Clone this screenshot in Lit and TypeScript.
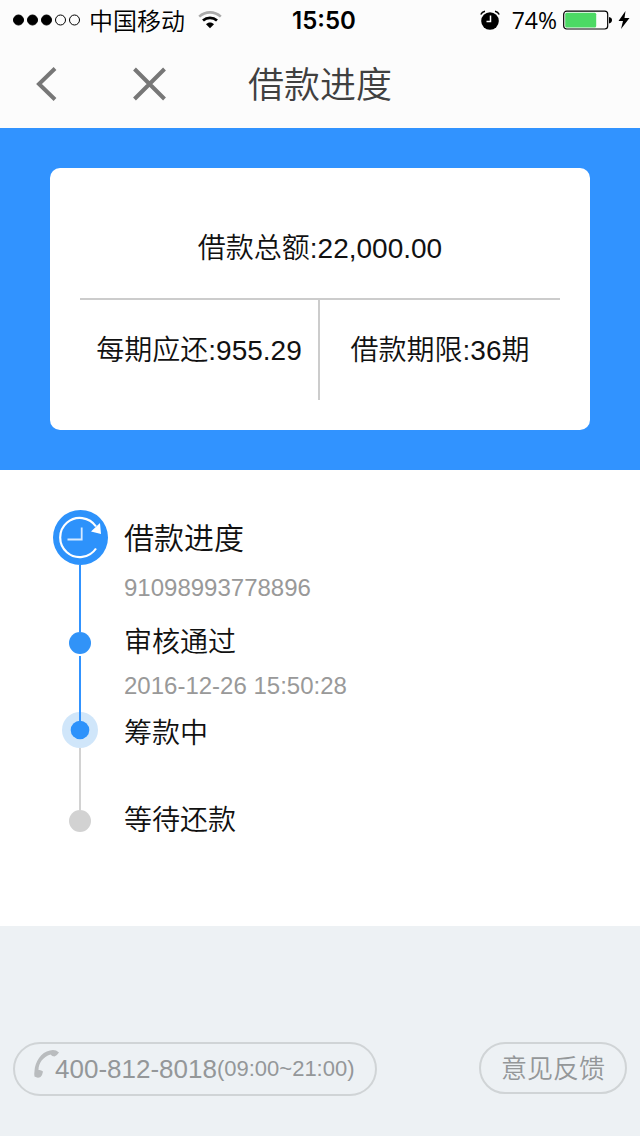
import { LitElement, html, css, svg, nothing } from "lit";
import { customElement, property } from "lit/decorators.js";

type StepState = "start" | "done" | "current" | "waiting";

interface Step {
  title: string;
  detail?: string;
  state: StepState;
}

@customElement("status-bar")
class StatusBar extends LitElement {
  static styles = css`
    :host {
      display: grid;
      grid-template-columns: 1fr auto 1fr;
      align-items: center;
      height: 40px;
      padding: 0 10px 0 13px;
      font: 24px/40px "Open Sans", "Noto Sans CJK SC", sans-serif;
      color: #000;
    }
    .side {
      display: flex;
      align-items: center;
    }
    .carrier {
      padding: 0 13px 0 8px;
      font-family: "Noto Sans CJK SC", sans-serif;
      font-weight: 350;
    }
    .time {
      padding: 2px 0 0 5px;
      font: 600 24px/38px Inter, sans-serif;
    }
    .right {
      justify-content: flex-end;
    }
    .percent {
      padding: 0 6px 0 12px;
      font-size: 23px;
    }
    .bolt {
      margin-left: 5px;
    }
  `;

  render() {
    return html`
      <div class="side">
        <svg width="68" height="12" viewBox="0 0 68 12">
          ${[0, 1, 2, 3, 4].map(
            (i) => svg`<circle cx=${5.5 + i * 14} cy="6" r="5"
              fill=${i < 3 ? "#000" : "none"} stroke="#000" stroke-width="1" />`
          )}
        </svg>
        <span class="carrier">中国移动</span>
        <svg width="24" height="18" viewBox="0 0 24 18" fill="none">
          <path d="M1.200 5.600C7.500 0 16.500 0 22.800 5.600" stroke="#aaa" stroke-width="2.600" />
          <path d="M5 9.500C9 6 15 6 19 9.500" stroke="#000" stroke-width="2.800" />
          <path d="M8 13.200C10.300 11 13.700 11 16 13.200L12 17.300Z" fill="#000" />
        </svg>
      </div>
      <div class="time">15:50</div>
      <div class="side right">
        <svg width="20" height="20" viewBox="0 0 20 20">
          <circle cx="10" cy="11" r="8.800" fill="#000" />
          <path d="M0.800 4.500Q2 1.800 5 1.200M19.200 4.500Q18 1.800 15 1.200" fill="none" stroke="#000" stroke-width="1.500" />
          <path d="M10.500 5.500V11.500H6.500" fill="none" stroke="#fff" stroke-width="1.500" />
        </svg>
        <span class="percent">74%</span>
        <svg width="50" height="20" viewBox="0 0 50 20">
          <rect x="0.700" y="1.200" width="44" height="17.800" rx="3" fill="none" stroke="#000" stroke-width="1.200" />
          <rect x="2.200" y="2.800" width="31" height="14.600" rx="1.500" fill="#4cd964" />
          <path d="M46 7Q49 7.500 49 10T46 13.500Z" fill="#000" />
        </svg>
        <svg class="bolt" width="12" height="18" viewBox="0 0 12 18">
          <path d="M7.500 0L0.500 10H5L3 18L11.500 7H6.500Z" fill="#000" />
        </svg>
      </div>
    `;
  }
}

@customElement("loan-summary")
class LoanSummary extends LitElement {
  static styles = css`
    :host {
      display: block;
      padding: 40px 50px;
      background: #3193ff;
      font: 350 28px/40px "Liberation Sans", "Noto Sans CJK SC", sans-serif;
      color: #111;
    }
    .card {
      display: grid;
      grid-template-columns: 1fr 1fr;
      padding: 30px;
      border-radius: 10px;
      background: #fff;
    }
    .cell {
      display: flex;
      align-items: center;
      justify-content: center;
      box-sizing: border-box;
      height: 100px;
      padding-top: 2px;
    }
    .total {
      grid-column: 1 / -1;
      height: 102px;
      border-bottom: 2px solid #ccc;
    }
    .monthly {
      border-right: 2px solid #ccc;
    }
  `;

  render() {
    return html`
      <div class="card">
        <div class="cell total">借款总额:22,000.00</div>
        <div class="cell monthly">每期应还:955.29</div>
        <div class="cell">借款期限:36期</div>
      </div>
    `;
  }
}

@customElement("progress-steps")
class ProgressSteps extends LitElement {
  @property({ attribute: false }) steps: Step[] = [];

  static styles = css`
    :host {
      display: block;
      padding: 40px 50px 94px;
      background: #fff;
      font: 350 28px/36px "Liberation Sans", "Noto Sans CJK SC", sans-serif;
      color: #111;
    }
    .list {
      margin: 0;
      padding: 0;
      list-style: none;
    }
    .step {
      display: grid;
      grid-template-columns: 60px 1fr;
      column-gap: 14px;
    }
    .marker {
      display: flex;
      flex-direction: column;
      align-items: center;
    }
    .line {
      flex: 1;
      width: 2px;
      background: #3193ff;
    }
    .title,
    .detail {
      margin: 0;
      font-weight: 350;
    }
    .title {
      font-size: 28px;
    }
    .detail {
      font-size: 24px;
      line-height: 24px;
      color: #999;
    }
    .start {
      min-height: 122px;
    }
    .start .title {
      font-size: 30px;
      line-height: 58px;
      padding-bottom: 8px;
    }
    .done {
      min-height: 80px;
    }
    .done .title {
      line-height: 22px;
      padding-bottom: 20px;
    }
    .done .line {
      margin-top: 2px;
    }
    .current {
      min-height: 98px;
    }
    .current .title {
      line-height: 44px;
    }
    .current .line {
      background: #d2d2d2;
    }
    .waiting .title {
      line-height: 22px;
    }
  `;

  private marker(state: StepState) {
    switch (state) {
      case "start":
        return html`<svg width="55" height="55" viewBox="0 0 55 55" fill="none">
          <circle cx="27.500" cy="27.500" r="27.500" fill="#2d92fb" />
          <path d="M43 38.500A19.600 19.600 0 1 1 43 16.500" stroke="#fff" stroke-width="2.200" />
          <path d="M38 21.500L47 13L48 24Z" fill="#fff" />
          <path d="M28.700 17.500V29.500H14.500" stroke="#d5e9ff" stroke-width="1.800" />
        </svg>`;
      case "current":
        return html`<svg width="36" height="36" viewBox="0 0 36 36">
          <circle cx="18" cy="18" r="18" fill="#d0e6fa" />
          <rect x="17" y="0" width="2" height="12" fill="#3193ff" />
          <circle cx="18" cy="18" r="9.300" fill="#2d92fb" />
        </svg>`;
      default:
        return html`<svg width="22" height="22" viewBox="0 0 22 22">
          <circle cx="11" cy="11" r="11" fill=${state === "done" ? "#3193f8" : "#d2d2d2"} />
        </svg>`;
    }
  }

  render() {
    return html`
      <ol class="list">
        ${this.steps.map(
          (step, i) => html`
            <li class="step ${step.state}">
              <div class="marker">
                ${this.marker(step.state)}
                ${i < this.steps.length - 1 ? html`<span class="line"></span>` : nothing}
              </div>
              <div>
                <h2 class="title">${step.title}</h2>
                ${step.detail ? html`<p class="detail">${step.detail}</p>` : nothing}
              </div>
            </li>
          `
        )}
      </ol>
    `;
  }
}

@customElement("app-root")
class AppRoot extends LitElement {
  static styles = css`
    :host {
      display: flex;
      flex-direction: column;
      min-height: 100vh;
      background: #fcfcfc;
      font-family: "Liberation Sans", "Noto Sans CJK SC", sans-serif;
    }
    .nav {
      display: flex;
      align-items: center;
      height: 88px;
      padding: 0 30px;
    }
    .icon-button {
      display: flex;
      padding: 0;
      border: 0;
      background: none;
      cursor: pointer;
    }
    .close {
      margin-left: 68px;
    }
    .heading {
      margin: 0 0 0 80px;
      padding-top: 4px;
      font-size: 36px;
      line-height: 48px;
      font-weight: 350;
      color: #404040;
    }
    .footer {
      display: flex;
      flex: 1;
      align-items: flex-start;
      justify-content: space-between;
      padding: 116px 13px 40px;
      background: #edf1f4;
    }
    .pill {
      display: flex;
      align-items: center;
      height: 52px;
      box-sizing: border-box;
      border: 2px solid #d0d4d6;
      border-radius: 27px;
      padding: 2px 20px 0;
      background: none;
      font: 350 26px/36px "Liberation Sans", "Noto Sans CJK SC", sans-serif;
      color: #949799;
      text-decoration: none;
      cursor: pointer;
    }
    .phone {
      height: 54px;
      padding-top: 0;
    }
    .handset {
      margin-bottom: 10px;
      overflow: visible;
    }
    .hours {
      font-size: 22px;
    }
  `;

  private steps: Step[] = [
    { title: "借款进度", detail: "91098993778896", state: "start" },
    { title: "审核通过", detail: "2016-12-26 15:50:28", state: "done" },
    { title: "筹款中", state: "current" },
    { title: "等待还款", state: "waiting" },
  ];

  render() {
    return html`
      <status-bar></status-bar>
      <header class="nav">
        <button class="icon-button" aria-label="返回">
          <svg width="34" height="34" viewBox="0 0 34 34" fill="none" stroke="#777" stroke-width="4">
            <path d="M25 1.500L9 17L25 32.500" />
          </svg>
        </button>
        <button class="icon-button close" aria-label="关闭">
          <svg width="36" height="34" viewBox="0 0 36 34" fill="none" stroke="#777" stroke-width="4">
            <path d="M2.500 2L32.500 32M32.500 2L2.500 32" />
          </svg>
        </button>
        <h1 class="heading">借款进度</h1>
      </header>
      <loan-summary></loan-summary>
      <progress-steps .steps=${this.steps}></progress-steps>
      <footer class="footer">
        <a class="pill phone" href="tel:4008128018">
          <svg class="handset" width="20" height="28" viewBox="0 0 20 28" fill="#b9bcbe">
            <path d="M-0.500 21C0 12 6 2 15 0.500Q20 -1 24 2.500Q22 5.500 19.500 6.500Q17 6.500 15.500 4.500C8 7 3.500 13 3.500 20Q6 19.500 8 21.500Q7.500 25 5.500 27Q2.500 28.500 -0.500 26.500Q-1 24 -0.500 21Z" />
          </svg>
          <span>400-812-8018</span><span class="hours">(09:00~21:00)</span>
        </a>
        <button class="pill">意见反馈</button>
      </footer>
    `;
  }
}
